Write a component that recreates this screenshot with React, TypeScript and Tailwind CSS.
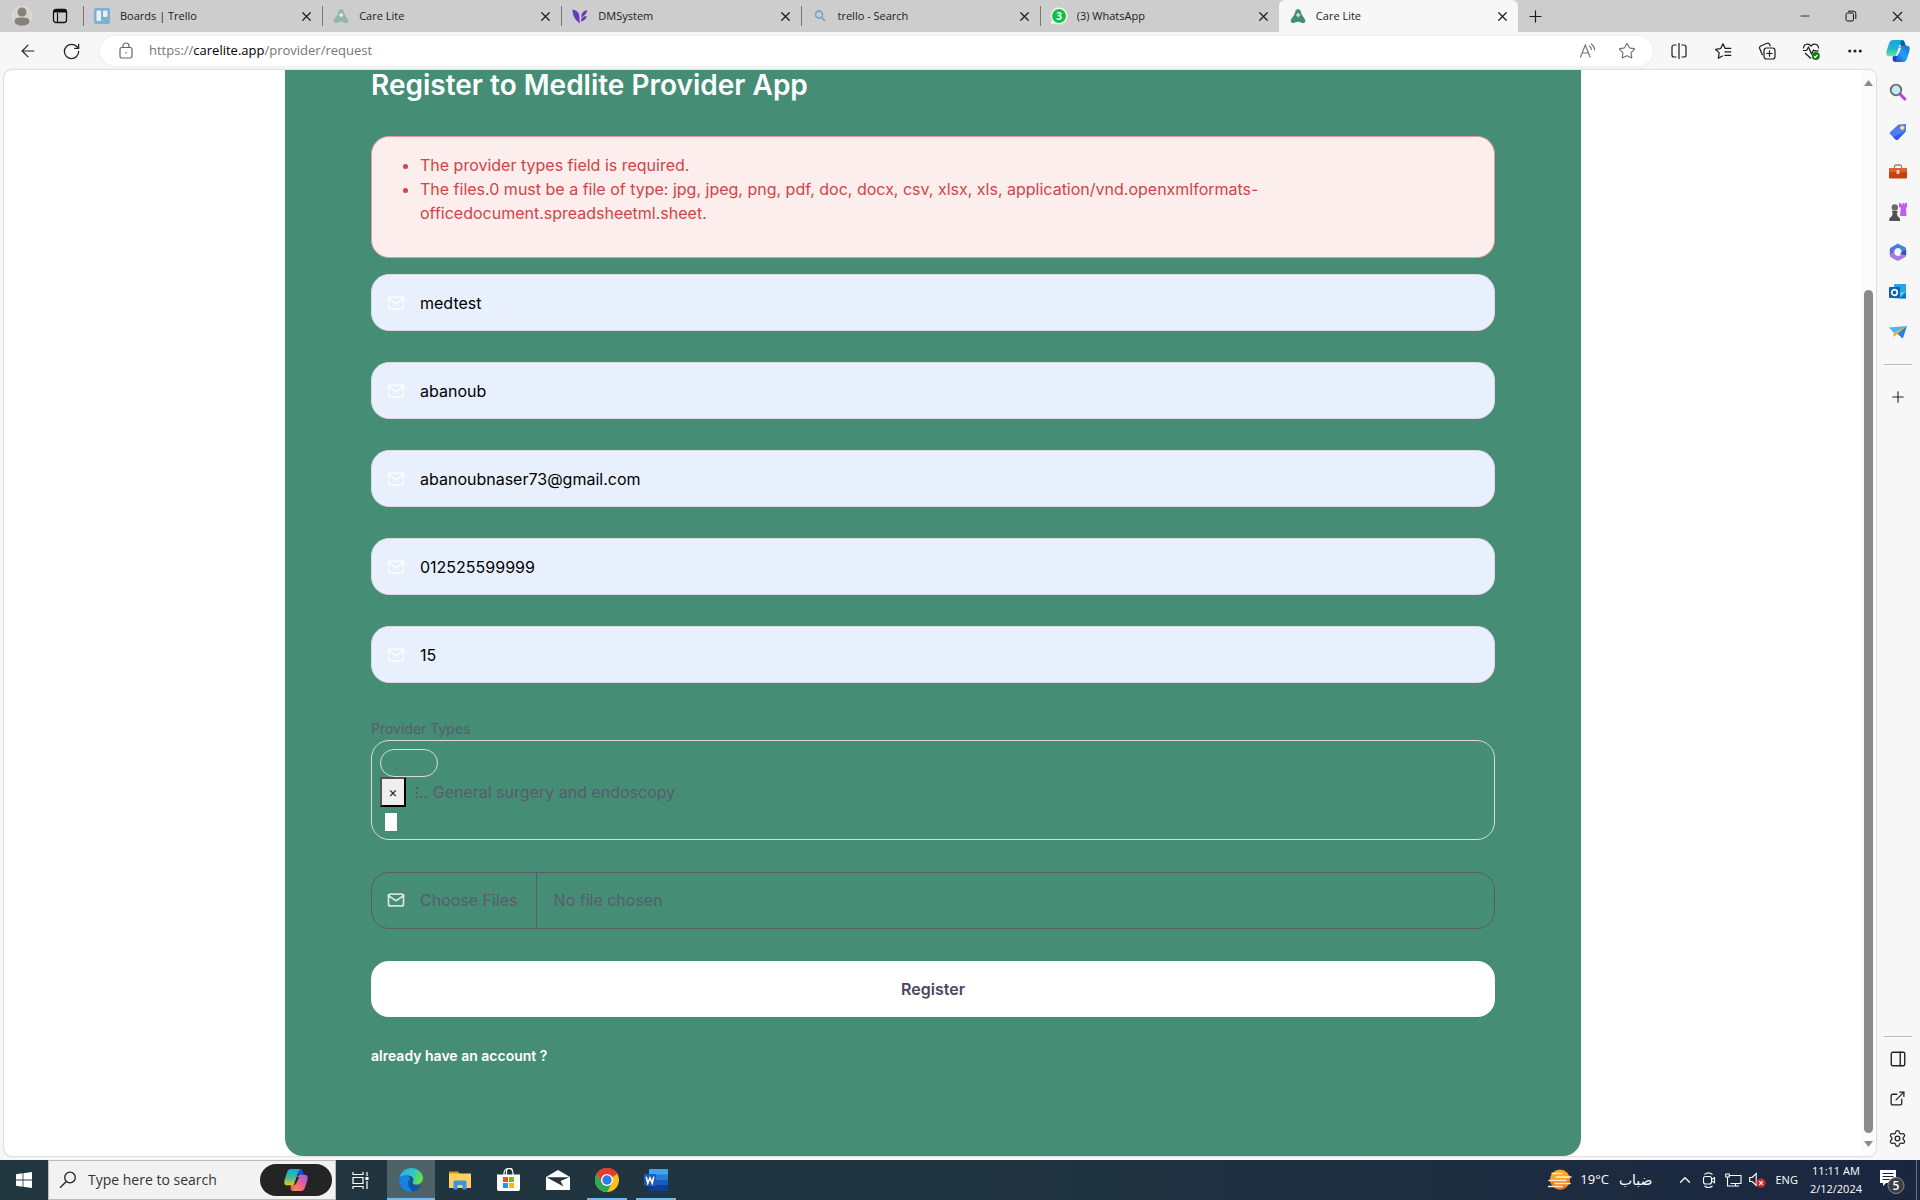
import React from "react";
import {
  ArrowLeft,
  ChevronUp,
  Ellipsis,
  ExternalLink,
  Minus,
  PanelRight,
  Plus,
  RotateCw,
  Search,
  Settings,
  Star,
  X,
} from "lucide-react";

/* ---------- favicons ---------- */

const TrelloIcon = () => (
  <svg width="16" height="16" viewBox="0 0 16 16">
    <rect width="16" height="16" rx="2" fill="#7fb0cf" />
    <rect x="2.5" y="2.5" width="4.5" height="10.5" rx="1" fill="#e8f0f5" />
    <rect x="9" y="2.5" width="4.5" height="6.5" rx="1" fill="#e8f0f5" />
  </svg>
);

const CareIcon = ({ color }: { color: string }) => (
  <svg width="16" height="16" viewBox="0 0 16 16">
    <path
      d="M5.400 3.200C6 .600 10 .600 10.600 3.200l1 3 3.400 5.200c1.400 2.400-1 4.600-3.400 3.400C9.400 13.300 6.800 13.300 4.500 14.700 2 15.800 0 13.800 1 11.400L4.200 6.800z"
      fill={color}
    />
    <path d="M8.200 5v4.200M6.100 7.100h4.200" stroke="#fff" strokeOpacity=".75" strokeWidth="1.500" />
  </svg>
);

const DmIcon = () => (
  <svg width="16" height="16" viewBox="0 0 16 16" fill="#673ab7">
    <path d="M.5 1.500C4 2 7 4 7.300 8L7.800 15.500C3 11.500.5 8 .5 1.500z" />
    <path d="M9.300 7.500C10 4.500 12 2.500 15 2c0 3-1.500 5.500-5.600 7.400zM9.300 11c1-2 3-2.700 5.400-3-.4 3-2.400 4.500-5.700 5.500z" />
  </svg>
);

const TabSearchIcon = () => (
  <svg width="16" height="16" viewBox="0 0 16 16" fill="none" stroke="#7ba6cc" strokeWidth="1.800">
    <circle cx="7" cy="6.500" r="3.500" />
    <path d="M9.500 9.300 13 13" />
  </svg>
);

const WhatsIcon = () => (
  <svg width="18" height="18" viewBox="0 0 18 18">
    <path d="M9 .5a8.500 8.500 0 1 1-4 16L1 17l.8-3.800A8.500 8.500 0 0 1 9 .5z" fill="#f2f7f3" />
    <circle cx="9" cy="9" r="7" fill="#10c143" />
    <text x="9" y="12.600" textAnchor="middle" fontSize="10" fontWeight="700" fill="#fff" fontFamily="Open Sans, sans-serif">
      3
    </text>
  </svg>
);

const tabs = [
  { title: "Boards | Trello", icon: <TrelloIcon /> },
  { title: "Care Lite", icon: <CareIcon color="#93b8a9" /> },
  { title: "DMSystem", icon: <DmIcon /> },
  { title: "trello - Search", icon: <TabSearchIcon /> },
  { title: "(3) WhatsApp", icon: <WhatsIcon /> },
];

/* ---------- browser chrome ---------- */

function TabStrip() {
  return (
    <header className="flex h-8 shrink-0 items-stretch bg-[#cdcdcd] text-xs text-[#1b1b1b]">
      <div className="flex w-[83px] shrink-0 items-center gap-5 pl-3">
        <button aria-label="Profile" className="flex h-6 w-5 shrink-0 items-center justify-center overflow-hidden">
          <svg width="20" height="24" viewBox="0 0 20 24">
            <circle cx="10" cy="12" r="9.500" fill="#d6d3ce" stroke="#e2dfda" />
            <circle cx="10" cy="8" r="4.500" fill="#85817c" />
            <path d="M2.500 18c0-4 3-4.500 7.500-4.500s7.500.5 7.500 4.500c-2 5-13 5-15 0z" fill="#85817c" />
          </svg>
        </button>
        <button aria-label="Tab actions" className="flex">
          <svg width="16" height="16" viewBox="0 0 16 16" fill="none" stroke="#111" strokeWidth="1.300">
            <rect x="1.500" y="1.500" width="13" height="13" rx="2.500" />
            <path d="M5.500 5v9" strokeWidth="1.200" />
            <path d="M2 3h12" strokeWidth="3" />
          </svg>
        </button>
      </div>
      <nav aria-label="Tabs" className="flex min-w-0 flex-[0_1_1435px]">
        {tabs.map((t) => (
          <div key={t.title} className="flex min-w-0 flex-1 items-center">
            <span className="h-5 w-px shrink-0 bg-[#777]" />
            <span className="ml-[9px] flex w-[18px] shrink-0 justify-center">{t.icon}</span>
            <span className="ml-[9px] flex-1 truncate text-[11px]">{t.title}</span>
            <button aria-label={"Close " + t.title} className="mr-2 shrink-0">
              <X size={15} strokeWidth={1.900} />
            </button>
          </div>
        ))}
        <div className="flex min-w-0 flex-1 items-center rounded-t-md bg-[#f7f7f7]">
          <span className="ml-[10px] flex w-[18px] shrink-0 justify-center">
            <CareIcon color="#458d74" />
          </span>
          <span className="ml-[9px] flex-1 truncate text-[11px]">Care Lite</span>
          <button aria-label="Close Care Lite" className="mr-2 shrink-0">
            <X size={15} strokeWidth={1.900} />
          </button>
        </div>
      </nav>
      <button aria-label="New tab" className="ml-2 flex items-center">
        <Plus size={19} strokeWidth={1.500} />
      </button>
      <div className="ml-auto flex">
        <button aria-label="Minimize" className="flex w-[46px] items-center justify-center">
          <Minus size={14} strokeWidth={1.500} />
        </button>
        <button aria-label="Restore" className="flex w-[46px] items-center justify-center">
          <svg width="12" height="12" viewBox="0 0 12 12" fill="none" stroke="#111">
            <rect x="1" y="3" width="7.500" height="8" rx="1.500" />
            <path d="M3 1.200h5.500a2.300 2.300 0 0 1 2.300 2.300V9" />
          </svg>
        </button>
        <button aria-label="Close window" className="flex w-[46px] items-center justify-center">
          <X size={17} strokeWidth={1.500} />
        </button>
      </div>
    </header>
  );
}

const CopilotIcon = ({ color }: { color: boolean }) => (
  <svg width="24" height="24" viewBox="0 0 24 24">
    <defs>
      <linearGradient id={color ? "ca" : "cb"} x1="0" y1="0" x2="0" y2="1">
        <stop offset="0" stopColor="#13a5ea" />
        <stop offset=".55" stopColor={color ? "#3fbf8a" : "#20b9c9"} />
        <stop offset="1" stopColor={color ? "#f5c321" : "#6fe69a"} />
      </linearGradient>
      <linearGradient id={color ? "cc" : "cd"} x1="1" y1="0" x2="0" y2="1">
        <stop offset="0" stopColor={color ? "#9a5cf0" : "#2a63d8"} />
        <stop offset=".5" stopColor={color ? "#ee5c93" : "#1fa4f5"} />
        <stop offset="1" stopColor={color ? "#fb9a45" : "#1b45cf"} />
      </linearGradient>
    </defs>
    <path d="M12 1h4c2 0 2.500 1.500 3 3.500L20 7h-5z" fill={color ? "#1c4fd6" : "#0a5f96"} />
    <path d="M7 17h5l-2.500 5.500C7.500 23 7 22 6.500 20z" fill={color ? "#f26a4c" : "#1b3fc4"} />
    <path d="M7.500 1H17c-2 .5-2.500 2-3.200 4.500L11 14.500c-.7 2-1.500 2.800-3.500 2.800H3.200C.5 17.300-.2 15 .6 12L3 4.500C3.800 2 5 1 7.500 1z" fill={"url(#" + (color ? "ca" : "cb") + ")"} />
    <path d="M16.500 23H7.500c2-.5 2.500-2 3.200-4.500L13.300 9.500c.7-2 1.500-2.800 3.500-2.800h4c2.700 0 3.400 2.300 2.600 5.300L21 19.500c-.8 2.500-2 3.500-4.500 3.500z" fill={"url(#" + (color ? "cc" : "cd") + ")"} />
    <path d="M12.800 9h2.400l-3 6.500h-2z" fill={color ? "#242424" : "#f7f7f7"} />
  </svg>
);

function Toolbar() {
  return (
    <div className="flex h-[38px] shrink-0 items-center bg-[#f7f7f7] text-[#222]">
      <button aria-label="Back" className="ml-[18px]">
        <ArrowLeft size={20} strokeWidth={1.400} />
      </button>
      <button aria-label="Refresh" className="ml-6">
        <RotateCw size={19} strokeWidth={1.600} />
      </button>
      <div className="ml-[19px] flex h-[30px] flex-1 items-center rounded-full bg-white shadow-[0_0_3px_rgba(0,0,0,0.08)]">
        <svg className="ml-[19px] shrink-0" width="14" height="18" viewBox="0 0 14 18" fill="none" stroke="#666" strokeWidth="1.200">
          <rect x="1" y="5.500" width="12" height="10.500" rx="1.800" />
          <path d="M4 5.500V4a3 3 0 0 1 6 0v1.500" />
          <circle cx="7" cy="10.700" r=".8" fill="#666" stroke="none" />
        </svg>
        <div className="ml-4 flex-1 text-[13px] text-[#767676]">
          https://<span className="text-black">carelite.app</span>/provider/request
        </div>
        <button aria-label="Read aloud" className="mr-[21px]">
          <svg width="18" height="18" viewBox="0 0 18 18" fill="none" stroke="#767676" strokeWidth="1.200" strokeLinecap="round">
            <path d="M1.500 15 6.300 3l4.800 12M3.200 11h6.300M10.500 4.200c1.200.8 1.800 2 1.900 3.300M12.300 2c2 1.300 3.200 3.300 3.300 6" />
          </svg>
        </button>
        <button aria-label="Favorite" className="mr-[17px]">
          <Star size={18} strokeWidth={1.500} color="#707070" />
        </button>
      </div>
      <div className="ml-[17px] flex items-center gap-[26px] pr-[10px]">
        <button aria-label="Split screen">
          <svg width="18" height="18" viewBox="0 0 18 18" fill="none" stroke="#1b1b1b" strokeWidth="1.200">
            <path d="M6.500 3H4a2 2 0 0 0-2 2v8a2 2 0 0 0 2 2h2.500M11.500 3H14a2 2 0 0 1 2 2v8a2 2 0 0 1-2 2h-2.500M9 1v16" />
          </svg>
        </button>
        <button aria-label="Favorites">
          <svg width="18" height="18" viewBox="0 0 18 18" fill="none" stroke="#1b1b1b" strokeWidth="1.200" strokeLinecap="round" strokeLinejoin="round">
            <path d="M11 6.200 9 1.800 6.600 6.600 1.500 7.300l3.700 3.600-.9 5.200L8.500 14M11 6.300h5.800M10.800 9.800h6M10.800 13.300h6" />
          </svg>
        </button>
        <button aria-label="Collections">
          <svg width="18" height="18" viewBox="0 0 18 18" fill="none" stroke="#1b1b1b" strokeWidth="1.200" strokeLinecap="round">
            <rect x="6" y="6" width="11" height="11" rx="2.500" />
            <path d="M11.500 8.800v5.400M8.800 11.500h5.400M4.300 12.800 1.700 6.500A2 2 0 0 1 2.700 4L9 1.300a2 2 0 0 1 2.600 1.100l.6 1.400" />
          </svg>
        </button>
        <button aria-label="Browser essentials">
          <svg width="18" height="18" viewBox="0 0 18 18" fill="none" stroke="#1b1b1b" strokeWidth="1.200" strokeLinejoin="round">
            <path d="M1.500 6.500C1.500 1.500 7 1 9 4.300c2-3.300 7.500-2.800 7.500 2.200M1 8.500h3.500L6.500 5l3 7 2-4 1 .8h4M3 11l6 5.500" />
            <circle cx="13.800" cy="14" r="4" fill="#107c10" stroke="none" />
            <path d="m12 14.300 1.300 1.200 2.200-2.600" stroke="#fff" />
          </svg>
        </button>
        <button aria-label="More">
          <Ellipsis size={18} strokeWidth={2.200} />
        </button>
        <button aria-label="Copilot" className="-ml-1">
          <CopilotIcon color={false} />
        </button>
      </div>
    </div>
  );
}

/* ---------- registration form ---------- */

const MailIcon = ({ className }: { className: string }) => (
  <svg className={className} width="20" height="20" viewBox="0 0 24 24" fill="none" stroke="white" strokeOpacity=".75" strokeWidth="2.200" strokeLinecap="round" strokeLinejoin="round">
    <rect x="3" y="5" width="18" height="14" rx="2" />
    <path d="m3 7 9 6 9-6" />
  </svg>
);

const fields = [
  { name: "username", label: "User name", value: "medtest" },
  { name: "name", label: "Name", value: "abanoub" },
  { name: "email", label: "Email", value: "abanoubnaser73@gmail.com" },
  { name: "phone", label: "Phone", value: "012525599999" },
  { name: "branches", label: "Branches", value: "15" },
];

function RegisterCard() {
  return (
    <main className="mx-auto h-full w-full max-w-[1296px] overflow-hidden rounded-b-[18px] bg-[#458d74] px-[86px] font-['Inter',sans-serif] text-base text-[#5a5c6e]">
      <h1 className="text-[28px] leading-[30px] font-semibold text-white">Register to Medlite Provider App</h1>
      <ul className="mt-9 list-disc rounded-[18px] border border-[#ea9a9b] bg-[#fceeed] pt-4 pr-4 pb-8 pl-12 leading-6 text-[#d04447]">
        <li>The provider types field is required.</li>
        <li>
          The files.0 must be a file of type: jpg, jpeg, png, pdf, doc, docx, csv, xlsx, xls,
          application/vnd.openxmlformats-officedocument.spreadsheetml.sheet.
        </li>
      </ul>
      <form onSubmit={(e) => e.preventDefault()}>
        <div className="mt-4 flex flex-col gap-[31px]">
          {fields.map((f) => (
            <div key={f.name} className="flex h-[57px] items-center rounded-[18px] border border-[#dbdade] bg-[#e8f0fe] pl-[14px]">
              <MailIcon className="shrink-0" />
              <input
                name={f.name}
                aria-label={f.label}
                defaultValue={f.value}
                className="ml-[14px] h-full flex-1 bg-transparent text-black outline-none"
              />
            </div>
          ))}
        </div>
        <label htmlFor="types" className="mt-[35px] block text-sm leading-[22px]">
          Provider Types
        </label>
        <div className="h-[100px] rounded-[18px] border border-[#dbdade] p-2">
          <div className="h-7 w-[58px] rounded-[14px] border border-[#dbdade]" />
          <div className="flex items-center">
            <button
              type="button"
              aria-label="Remove General surgery and endoscopy"
              className="h-[30px] w-[26px] border-2 border-t-[#555] border-r-black border-b-black border-l-[#555] bg-[#efefef] text-sm leading-5 text-[#222]"
            >
              ×
            </button>
            <span className="ml-[10px] h-[11px] border-l-2 border-dotted border-[#5a5c6e]" />
            <span className="ml-px">.. General surgery and endoscopy</span>
          </div>
          <input id="types" type="search" className="mt-[6px] ml-[5px] block h-[18px] w-3 bg-white outline-none" />
        </div>
        <div className="relative mt-8">
          <MailIcon className="pointer-events-none absolute top-[18px] left-[15px]" />
          <input
            type="file"
            multiple
            aria-label="Files"
            className="block h-[57px] w-full rounded-[18px] border border-[#5a5c6e] leading-[55px] file:mr-[17px] file:h-full file:border-r file:border-[#5a5c6e] file:pr-[18px] file:pl-12"
          />
        </div>
        <button type="submit" className="mt-8 block h-14 w-full rounded-[18px] bg-white font-semibold text-[#4b465c]">
          Register
        </button>
      </form>
      <a href="#login" className="mt-7 inline-block text-sm leading-[22px] font-semibold text-white">
        already have an account ?
      </a>
    </main>
  );
}

function ScrollBar() {
  return (
    <div className="flex w-[14px] shrink-0 flex-col items-center bg-[#fcfcfc] pr-px">
      <svg className="mt-[10px] shrink-0" width="9" height="6" viewBox="0 0 9 6">
        <path d="M4.500 0 9 6H0z" fill="#8b8b8b" />
      </svg>
      <span className="flex-[204]" />
      <span className="w-[9px] flex-[844] rounded-full bg-[#8b8b8b]" />
      <svg className="mt-2 mb-[9px] shrink-0" width="9" height="6" viewBox="0 0 9 6">
        <path d="M4.500 6 9 0H0z" fill="#8b8b8b" />
      </svg>
    </div>
  );
}

/* ---------- Edge sidebar ---------- */

const sideIcons = [
  {
    name: "Search",
    art: (
      <>
        <path d="m11 11 4.800 5" stroke="#c239f0" strokeWidth="3" strokeLinecap="round" />
        <circle cx="7" cy="7" r="5.300" fill="#c5e6fb" stroke="#6b6b6b" strokeWidth="1.800" />
      </>
    ),
  },
  {
    name: "Shopping",
    art: (
      <>
        <path d="M9.500 1.500 16 1c.8 0 1 .4 1 1v6L9 16.500c-.8.8-1.600.8-2.400 0L1.300 11.300c-.8-.8-.8-1.600 0-2.400z" fill="#4f7df5" />
        <path d="m17 8-8 8.500c-.8.8-1.600.8-2.400 0L4 14z" fill="#3657e8" />
        <circle cx="13.300" cy="4.800" r="1.900" fill="#fff3c0" stroke="#f2c230" />
      </>
    ),
  },
  {
    name: "Tools",
    art: (
      <>
        <path d="M5.500 5V3.500c0-1 .5-1.500 1.500-1.500h4c1 0 1.500.5 1.500 1.500V5" fill="none" stroke="#8a8a8a" strokeWidth="1.300" />
        <rect x="0" y="5" width="18" height="10.500" rx="1" fill="#c9400f" />
        <path d="M0 5h18v4H0z" fill="#e0622b" />
        <rect x="7.500" y="7" width="3" height="4" rx="1" fill="#d9d9d9" />
      </>
    ),
  },
  {
    name: "Games",
    art: (
      <>
        <path d="M10 0h2v1.500h1.500V0h2v1.500H16V0h2v4l-1 1 .5 8H11l.7-8L10 4z" fill="#c45cf2" />
        <circle cx="5.800" cy="4.500" r="3.200" fill="#6b6b6b" />
        <path d="M3 8h5.600v1.500H7.800L8.500 13l2.500 2.500V18H.3v-2.500L3 13l.8-3.500H3z" fill="#505050" />
      </>
    ),
  },
  {
    name: "Microsoft 365",
    art: (
      <>
        <path d="M9 .5 2 4.500C1 5.200.8 6 .8 7v5l4.400-2.600C5 6.500 7 5 9.500 5z" fill="#5a6fe0" />
        <path d="M8.500.6 15.800 4c1 .6 1.300 1.400 1.300 2.500v6L12.500 9c0-2.500-1.500-4-4-4z" fill="#3f86e0" />
        <path d="M.8 11.500 5.200 9c0 2 1.500 4 4 4l7-2 .9 1c0 1-.5 1.800-1.300 2.300L10 17.500c-.8.4-1.600.4-2.400 0l-5.300-3C1.200 13.800.8 12.800.8 11.500z" fill="#a77be6" />
        <path d="m17.100 12-6.600-.5 2-2.500 4.600-2z" fill="#3b4fb8" />
        <circle cx="8.900" cy="9" r="3" fill="#f7f7f7" />
      </>
    ),
  },
  {
    name: "Outlook",
    art: (
      <>
        <rect x="5" y="1" width="12" height="9" rx="1" fill="#2aa3ea" />
        <path d="M5 9h12v6.500H5z" fill="#50c8f5" />
        <path d="m17 9-7 6.500h7z" fill="#1273b8" />
        <rect x="0" y="4" width="11" height="11" rx="1" fill="#0a63b4" />
        <circle cx="5.500" cy="9.500" r="2.800" fill="none" stroke="#fff" strokeWidth="1.700" />
      </>
    ),
  },
  {
    name: "Drop",
    art: (
      <>
        <path d="M0 4.500 18 3 5 10z" fill="#49b7f2" />
        <path d="M18 3 7 9.500l6 5.500c.5.400 1 .2 1.200-.4z" fill="#2b7fe0" />
        <path d="m18 3-13 7-1 4 3-2z" fill="#f0a92b" />
      </>
    ),
  },
];

function SideBar() {
  return (
    <aside className="flex w-11 shrink-0 flex-col items-center pr-px text-[#222]">
      <div className="mt-[13px] flex flex-col gap-[22px]">
        {sideIcons.map((s) => (
          <button key={s.name} aria-label={s.name}>
            <svg width="18" height="18" viewBox="0 0 18 18" fill="none">
              {s.art}
            </svg>
          </button>
        ))}
      </div>
      <hr className="mt-[23px] w-7 border-[#bdbdbd]" />
      <button aria-label="Add" className="mt-[23px]">
        <Plus size={18} strokeWidth={1.500} />
      </button>
      <hr className="mt-auto w-7 border-[#bdbdbd]" />
      <button aria-label="Hide sidebar" className="mt-[13px]">
        <PanelRight size={18} strokeWidth={1.800} />
      </button>
      <button aria-label="Open link" className="mt-[22px]">
        <ExternalLink size={17} strokeWidth={1.800} />
      </button>
      <button aria-label="Settings" className="mt-[22px] mb-[12px]">
        <Settings size={19} strokeWidth={1.600} />
      </button>
    </aside>
  );
}

/* ---------- taskbar ---------- */

const EdgeLogo = () => (
  <svg width="24" height="24" viewBox="0 0 24 24">
    <defs>
      <linearGradient id="e1" x1="0" y1="0" x2="1" y2=".4">
        <stop offset="0" stopColor="#27a9e6" />
        <stop offset=".6" stopColor="#2fc7c0" />
        <stop offset="1" stopColor="#66e04c" />
      </linearGradient>
    </defs>
    <path d="M0 12C0 5 5 0 12 0s12 5 12 10c0 4-3 6.500-6.500 6.500-2.500 0-3-.8-3.500-1.500 1 3 5 3.500 8.500 2C20 21.500 16 24 12.500 24 5 24 0 19 0 12z" fill="#0f55a3" />
    <path d="M0 11C1 4 6 0 12 0c7 0 12 5 12 10 0 4-3 6.500-6.500 6.500-3.500 0-4.500-1.500-3.500-3 1.500-2.500-.5-6-5-6S0 9 0 11z" fill="url(#e1)" />
    <path d="M0 12c0-3 3.500-5 7.500-4.500C11 8 12 10 10.500 11.500 8 14 9 20 14 23.500 6 25.500 0 19 0 12z" fill="#1683da" />
  </svg>
);

const FolderLogo = () => (
  <svg width="22" height="20" viewBox="0 0 22 20">
    <path d="M0 1.500h9l2 2.500H0z" fill="#d89510" />
    <path d="M0 3.500h22V18H0z" fill="#fbd163" />
    <path d="M4.500 12c0-1 .5-1.500 1.500-1.500h10c1 0 1.500.5 1.500 1.500v7.500h-4V15h-5v4.500h-4z" fill="#3c94dc" />
  </svg>
);

const StoreLogo = () => (
  <svg width="23" height="24" viewBox="0 0 23 24">
    <path d="M7 7V5a4.500 4.500 0 0 1 9 0v2M9.500 7V3.500a3 3 0 0 1 6-.5" fill="none" stroke="#fff" strokeWidth="1.200" />
    <path d="M0 6.500h23V21c0 1-.5 2-2 2H2c-1.500 0-2-1-2-2z" fill="#fff" />
    <rect x="6" y="9" width="5" height="5" fill="#f25022" />
    <rect x="12" y="9" width="5" height="5" fill="#7fba00" />
    <rect x="6" y="15" width="5" height="5" fill="#00a4ef" />
    <rect x="12" y="15" width="5" height="5" fill="#ffb900" />
  </svg>
);

const MailLogo = () => (
  <svg width="24" height="20" viewBox="0 0 24 20">
    <path d="M12 0 24 7v13H0V7z" fill="#fff" />
    <path d="M.5 7.300h23L14.500 11l3 5.500z" fill="#21363f" />
  </svg>
);

const ChromeLogo = () => (
  <svg width="24" height="24" viewBox="0 0 24 24">
    <circle cx="12" cy="12" r="12" fill="#fbc116" />
    <path d="M12 12 1.600 6A12 12 0 0 1 22.400 6z" fill="#e33b2e" />
    <path d="M12 6h10.400A12 12 0 0 0 1.600 6L7 15z" fill="#e33b2e" />
    <path d="M1.600 6A12 12 0 0 0 12 24l5.200-9H7z" fill="#2da94f" />
    <circle cx="12" cy="12" r="6" fill="#fff" />
    <circle cx="12" cy="12" r="4.700" fill="#2f7bea" />
  </svg>
);

const WordLogo = () => (
  <svg width="24" height="22" viewBox="0 0 24 22">
    <path d="M6 0h17c.6 0 1 .4 1 1v5H5V1c0-.6.4-1 1-1z" fill="#41a5ee" />
    <path d="M5 5.500h19V11H5z" fill="#2b7cd3" />
    <path d="M5 11h19v5.500H5z" fill="#185abd" />
    <path d="M5 16h19v5c0 .6-.4 1-1 1H6c-.6 0-1-.4-1-1z" fill="#103f91" />
    <rect x="0" y="5" width="12" height="12" rx="1" fill="#185abd" />
    <path d="m2.200 7.800 1.600 6.400L6 8.800l2.200 5.400 1.600-6.400" fill="none" stroke="#fff" strokeWidth="1.600" />
  </svg>
);

function Taskbar() {
  return (
    <footer className="flex h-10 shrink-0 items-stretch bg-linear-to-r from-[#21363f] via-[#20343f] via-50% to-[#1a2640] font-['Open_Sans','Noto_Sans',sans-serif] text-xs text-white">
      <button aria-label="Start" className="flex w-12 shrink-0 items-center justify-center">
        <svg width="16" height="16" viewBox="0 0 16 16" fill="#fff">
          <path d="M0 2.200 6.600 1.300v6.300H0zM7.400 1.200 16 0v7.600H7.400zM0 8.400h6.600v6.300L0 13.800zM7.400 8.400H16V16l-8.600-1.200z" />
        </svg>
      </button>
      <div className="flex w-72 shrink-0 items-center border border-[#bbb] bg-[#f2f2f2] pl-[10px]">
        <svg width="18" height="18" viewBox="0 0 18 18" fill="none" stroke="#222" strokeWidth="1.300">
          <circle cx="11" cy="6.500" r="5.300" />
          <path d="M7.300 10.500 1 16.800" />
        </svg>
        <input
          type="search"
          aria-label="Search Windows"
          placeholder="Type here to search"
          className="ml-[11px] w-0 flex-1 bg-transparent text-sm outline-none placeholder:text-[#333]"
        />
        <button aria-label="Copilot" className="mr-[3px] flex h-8 w-[72px] items-center justify-center rounded-full bg-[#242424]">
          <CopilotIcon color />
        </button>
      </div>
      <button aria-label="Task view" className="flex w-[51px] items-center pl-4">
        <svg width="17" height="17" viewBox="0 0 17 17" fill="none" stroke="#fff" strokeWidth="1.200">
          <path d="M1 0v2.500h10V0M1 17v-2.500h10V17M1 5.500h10v6H1zM15 0v4M15 9v8" />
          <path d="M13.500 5h3v3h-3z" fill="#fff" stroke="none" />
        </svg>
      </button>
      <button aria-label="Edge" className="flex w-12 items-center justify-center border-b-2 border-[#76b9ed] bg-[#4f6268] pt-0.5">
        <EdgeLogo />
      </button>
      <button aria-label="File Explorer" className="flex w-[49px] items-center justify-center">
        <FolderLogo />
      </button>
      <button aria-label="Store" className="flex w-[49px] items-center justify-center">
        <StoreLogo />
      </button>
      <button aria-label="Mail" className="flex w-[49px] items-center justify-center">
        <MailLogo />
      </button>
      <button aria-label="Chrome" className="mx-[5px] flex w-10 items-center justify-center border-b-2 border-[#76b9ed] pt-0.5">
        <ChromeLogo />
      </button>
      <button aria-label="Word" className="mx-1 flex w-10 items-center justify-center border-b-2 border-[#76b9ed] pt-0.5">
        <WordLogo />
      </button>
      <div className="ml-auto flex items-center">
        <button className="flex items-center">
          <svg width="24" height="22" viewBox="0 0 24 22">
            <circle cx="12" cy="10.500" r="10" fill="#fba81c" />
            <path d="M2 10.500a10 10 0 0 0 20 0z" fill="#f27c1d" />
            <path d="M4 4.500h10M8 8h15M1 11.500h17M7 14.500h15M0 17.500h14" stroke="#f7ead0" strokeWidth="1.600" strokeLinecap="round" />
          </svg>
          <span className="ml-2 text-[13px]">19°C</span>
          <span className="ml-[10px] font-['DejaVu_Sans',sans-serif] text-sm" lang="ar" dir="rtl">
            ضباب
          </span>
        </button>
        <button aria-label="Hidden icons" className="ml-6">
          <ChevronUp size={18} strokeWidth={1.700} />
        </button>
        <button aria-label="Meet Now" className="ml-[7px]">
          <svg width="16" height="16" viewBox="0 0 16 16" fill="none" stroke="#fff" strokeWidth="1.100">
            <rect x="2.500" y="4.500" width="8" height="7.500" rx="2" />
            <path d="m10.500 7.500 3-1.800v5l-3-1.800M3.500 2.500c2.500-2 5.500-2 8 0M3.500 14c2.500 2 5.500 2 8 0" />
          </svg>
        </button>
        <button aria-label="Network" className="ml-2">
          <svg width="17" height="14" viewBox="0 0 17 14" fill="none" stroke="#fff" strokeWidth="1.100">
            <path d="M4.500 2.500h11.500v8H5.500M.8 1h3.400v3H.8zM2.500 4v9h8M10.500 10.500V13H14" />
          </svg>
        </button>
        <button aria-label="Volume muted" className="ml-[7px]">
          <svg width="17" height="16" viewBox="0 0 17 16" fill="none">
            <path d="M.7 5.500h2.500l4-4v12l-4-4H.7z" stroke="#fff" strokeWidth="1.100" />
            <circle cx="12" cy="11" r="4.500" fill="#d9262c" />
            <path d="m10.200 9.200 3.600 3.600m0-3.600-3.600 3.600" stroke="#fff" strokeWidth="1.200" />
          </svg>
        </button>
        <button className="ml-[9px] text-[11px]">ENG</button>
        <time className="ml-3 text-center text-[11px] leading-[18px]">
          <span className="block">11:11 AM</span>
          <span className="block">2/12/2024</span>
        </time>
        <button aria-label="5 notifications" className="ml-[18px] pt-1">
          <svg width="26" height="26" viewBox="0 0 26 26">
            <path d="M0 1h16v13H6l-3 3v-3H0z" fill="#fff" />
            <path d="M2.500 4.500h11M2.500 7.500h11M2.500 10.500h7" stroke="#1a2640" strokeWidth="1.100" />
            <circle cx="16" cy="16.500" r="8" fill="#3a3d42" stroke="#888" />
            <text x="16" y="21" textAnchor="middle" fontSize="12" fontWeight="600" fill="#fff">
              5
            </text>
          </svg>
        </button>
        <span className="ml-[10px] mr-[3px] h-10 w-px bg-[#68708a]" />
      </div>
    </footer>
  );
}

export default function App() {
  return (
    <div className="flex h-screen flex-col overflow-hidden bg-[#f7f7f7] font-['Open_Sans','Noto_Sans',sans-serif]">
      <TabStrip />
      <Toolbar />
      <div className="flex min-h-0 flex-1">
        <div className="mb-1 ml-1 flex min-w-0 flex-1 overflow-hidden rounded-lg bg-white shadow-[0_0_2px_rgba(0,0,0,0.35)]">
          <div className="min-w-0 flex-1">
            <RegisterCard />
          </div>
          <ScrollBar />
        </div>
        <SideBar />
      </div>
      <Taskbar />
    </div>
  );
}
